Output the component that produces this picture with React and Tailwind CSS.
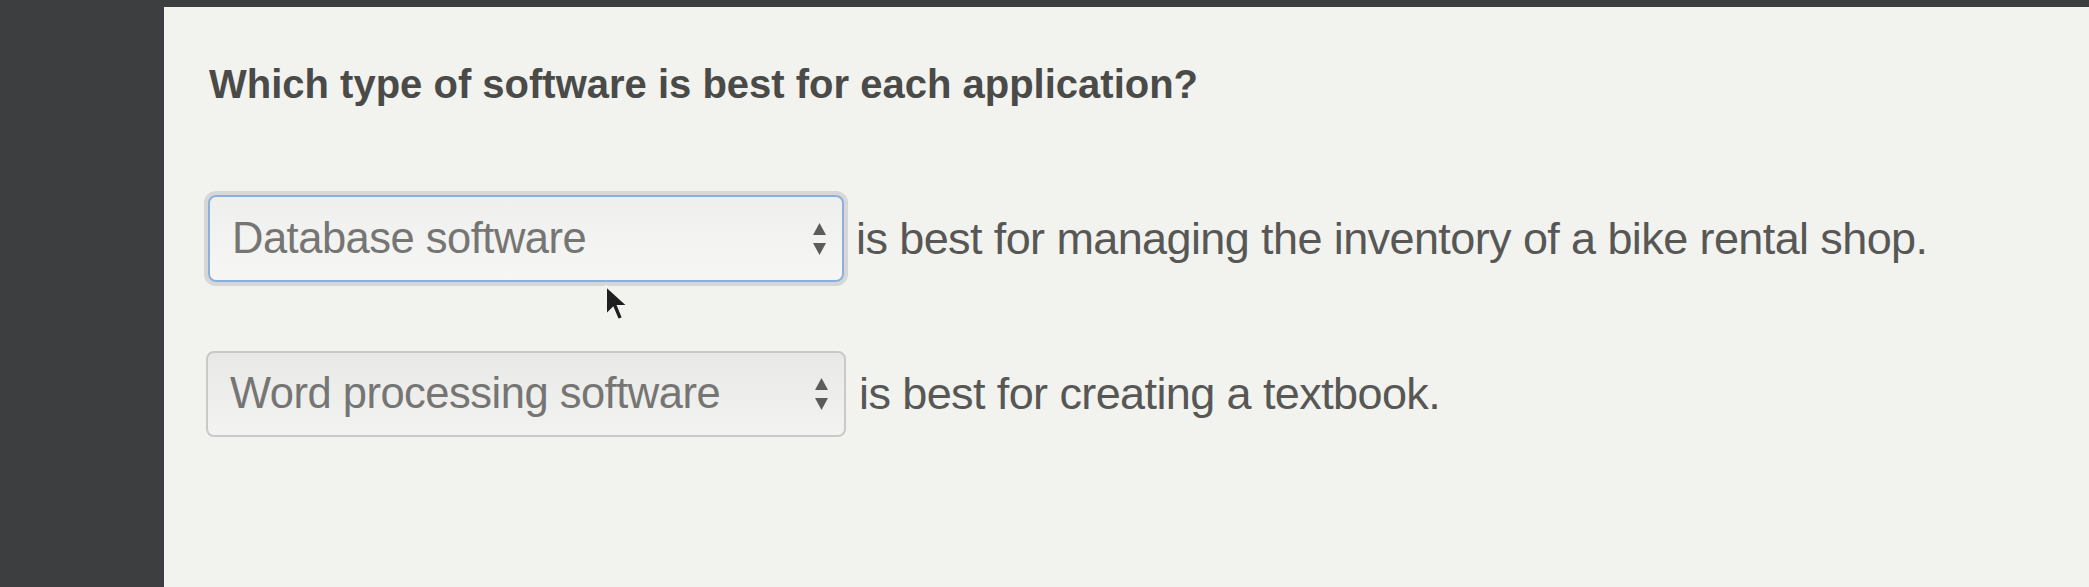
import React from "react";

const Arrows = () => (
  <svg width="17" height="36" viewBox="0 0 17 36" className="shrink-0">
    <path d="M8.5 2 L15 14 L2 14 Z" fill="#5c5c5c" />
    <path d="M8.5 34 L15 22 L2 22 Z" fill="#5c5c5c" />
  </svg>
);

const FakeSelect = ({ value, focused }) => (
  <div
    className={
      focused
        ? "flex items-center justify-between w-[636px] h-[87px] pl-[22px] pr-[14px] rounded-[8px] border-2 border-[#8bb0dc] bg-gradient-to-b from-[#efefed] to-[#f6f6f4] shadow-[0_0_0_4px_#d6d7d6]"
        : "flex items-center justify-between w-[640px] h-[86px] pl-[22px] pr-[14px] rounded-[8px] border-2 border-[#c9c9c7] bg-gradient-to-b from-[#e8e8e6] to-[#f3f3f1]"
    }
  >
    <span className="text-[43.5px] text-[#757573] tracking-[-0.5px]">{value}</span>
    <Arrows />
  </div>
);

export default function App() {
  return (
    <div
      className="relative flex w-full h-[587px] bg-[#3c3e3f] overflow-hidden"
      style={{ fontFamily: '"Liberation Sans", Arial, sans-serif' }}
    >
      <div className="w-[164px] shrink-0" />
      <div className="flex-1 mt-[7px] bg-[#f2f2ef] pl-[45px] pt-[54px]">
        <h1 className="text-[40px] font-bold text-[#4a4a48] leading-[46px]">
          Which type of software is best for each application?
        </h1>

        <div className="flex flex-col gap-[69px] mt-[88px]">
          <div className="flex items-center gap-[12px] -ml-[1px]">
            <FakeSelect value="Database software" focused />
            <span className="text-[45px] text-[#575755] tracking-[-0.6px]">
              is best for managing the inventory of a bike rental shop.
            </span>
          </div>
          <div className="flex items-center gap-[13px] -ml-[3px]">
            <FakeSelect value="Word processing software" />
            <span className="text-[45px] text-[#575755] tracking-[-0.6px]">
              is best for creating a textbook.
            </span>
          </div>
        </div>
      </div>

      {/* mouse cursor over the first select */}
      <svg
        className="absolute left-[604px] top-[285px]"
        width="26"
        height="40"
        viewBox="0 0 26 40"
      >
        <path
          d="M2 1 L2 30 L9 23 L14 35 L19 33 L14 21 L24 21 Z"
          fill="#1f1f1f"
          stroke="#f3f3f0"
          strokeWidth="2"
        />
      </svg>
    </div>
  );
}
